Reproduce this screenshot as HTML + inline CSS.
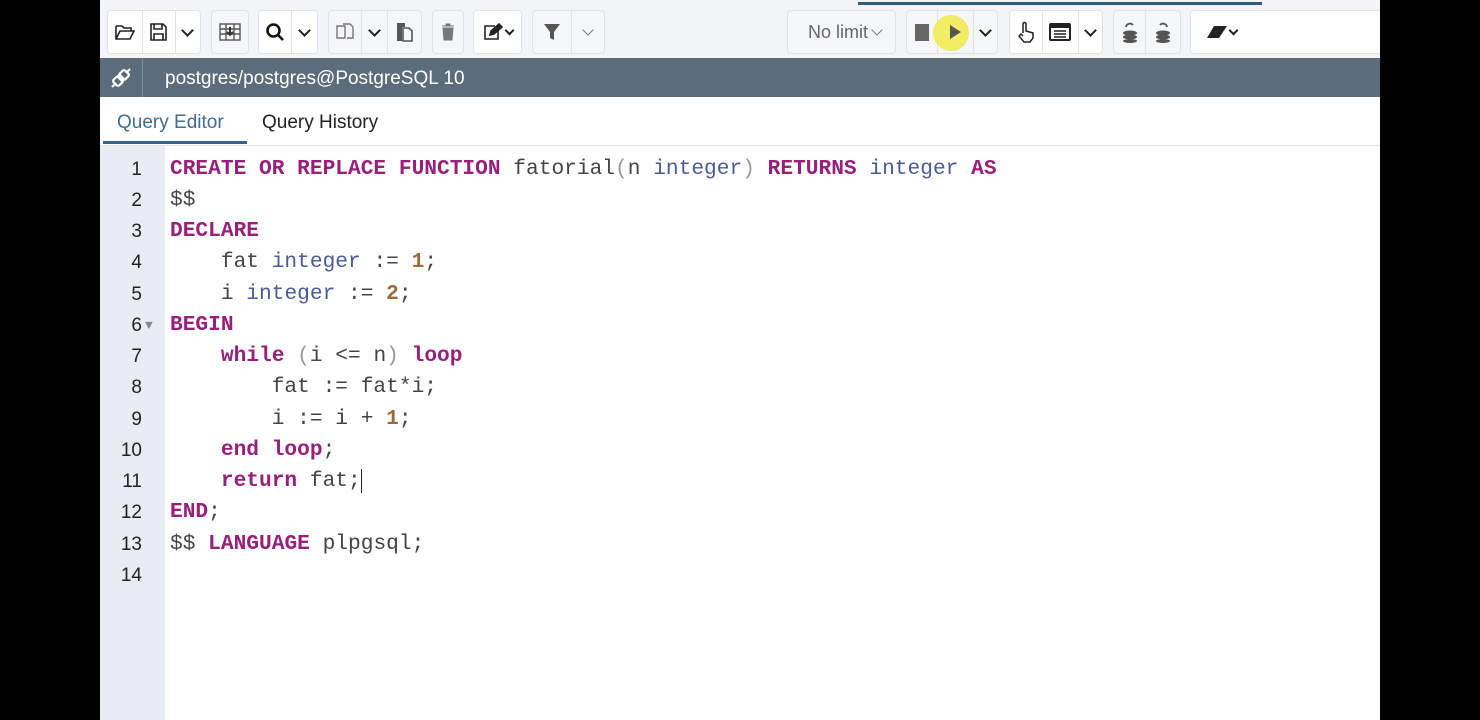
<!DOCTYPE html>
<html><head><meta charset="utf-8"><style>
*{margin:0;padding:0;box-sizing:border-box}
body{width:1480px;height:720px;background:#000;position:relative;overflow:hidden;font-family:"Liberation Sans",sans-serif}
#app{position:absolute;left:100px;top:0;width:1280px;height:720px;background:#fff;overflow:hidden}
#tb{position:absolute;left:0;top:0;width:1280px;height:58px;background:#f2f4f7}
.grp{position:absolute;top:10px;height:44px;background:#fff;border:1px solid #dfe3e8;border-radius:4px;display:flex}
.grp.g{background:#f5f6f8}
.c{height:100%;border-right:1px solid #dfe3e8;display:flex;align-items:center;justify-content:center;color:#222;font-size:15px}
.c:last-child{border-right:none}
.dd::after{content:"";width:7px;height:7px;border-right:2px solid #222;border-bottom:2px solid #222;transform:rotate(45deg);margin-top:-4px}
.ddl::after{content:"";width:7px;height:7px;border-right:1.5px solid #777;border-bottom:1.5px solid #777;transform:rotate(45deg);margin-top:-4px}
#hdr{position:absolute;left:0;top:58px;width:1280px;height:39px;background:#5b6c7b;color:#fff;font-size:19px}
#tabs{position:absolute;left:0;top:97px;width:1280px;height:49px;border-bottom:1px solid #e2e5ea;font-size:19px}
#gut{position:absolute;left:0;top:146px;width:65px;height:574px;background:#e9edf3}
.ln{position:absolute;font:21.2px/31.25px "Liberation Mono",monospace;white-space:pre}
.num{left:0;width:42px;text-align:right;color:#222;font-family:"Liberation Sans",sans-serif;font-size:19px}
.code{left:70px;color:#444}
.k{color:#98207c;font-weight:bold}
.t{color:#4a5a9a}
.n{color:#9a6a3a;font-weight:bold}
.p{color:#999}
</style></head><body>
<div id="app">
<div id="tb">
 <div style="position:absolute;left:758px;top:2px;width:404px;height:3px;background:#2f5d80"></div>
 <div class="grp" style="left:7px;width:94px">
  <div class="c" style="width:36px"><svg width="20" height="18" viewBox="0 0 20 18" fill="none" stroke="#222" stroke-width="1.6"><path d="M1 3h6l2 2h7v3M1 3v13h14l4-8H5L1 16"/></svg></div>
  <div class="c" style="width:33px"><svg width="17" height="18" viewBox="0 0 17 18" fill="none" stroke="#222" stroke-width="1.6"><path d="M1 1h12l3 3v13H1z M4 1v5h8V1 M4 17v-6h9v6"/></svg></div>
  <div class="c dd" style="width:25px"></div></div>
 <div class="grp g" style="left:111px;width:38px"><div class="c" style="width:38px"><svg width="22" height="18" viewBox="0 0 22 18" fill="none" stroke="#555" stroke-width="1.4"><rect x="1" y="1" width="20" height="16"/><path d="M1 6h20M1 11h20M7 1v16M15 1v16"/><path d="M11 4v8M8 9l3 3 3-3" stroke="#333" stroke-width="2"/></svg></div></div>
 <div class="grp" style="left:158px;width:60px"><div class="c" style="width:34px"><svg width="20" height="20" viewBox="0 0 20 20" fill="none" stroke="#111" stroke-width="2.6"><circle cx="8.5" cy="8.5" r="6"/><path d="M13 13l5 5"/></svg></div><div class="c dd" style="width:26px"></div></div>
 <div class="grp g" style="left:228px;width:94px"><div class="c" style="width:34px"><svg width="20" height="20" viewBox="0 0 20 20" fill="none" stroke="#777" stroke-width="1.4"><path d="M2 4h8v12H2zM8 2h7l3 3v11h-6"/></svg></div><div class="c dd" style="width:26px"></div><div class="c" style="width:34px"><svg width="18" height="20" viewBox="0 0 18 20"><path d="M2 1h8v4h-3v14H2z" fill="#555"/><path d="M8 6h6l3 3v10H8z" fill="none" stroke="#555" stroke-width="1.6"/></svg></div></div>
 <div class="grp g" style="left:332px;width:32px"><div class="c" style="width:32px"><svg width="14" height="18" viewBox="0 0 14 18"><path d="M1 3h12M5 3V1h4v2M2 5h10l-1 12H3z" fill="#777" stroke="#777"/></svg></div></div>
 <div class="grp" style="left:373px;width:49px"><div class="c" style="width:49px;gap:3px"><svg width="20" height="18" viewBox="0 0 20 18" fill="none" stroke="#222" stroke-width="1.6"><path d="M12 3H2v13h13V8"/><path d="M7 12l1-4 8-7 3 3-8 7z" fill="#222"/></svg><span style="width:7px;height:7px;border-right:2px solid #222;border-bottom:2px solid #222;transform:rotate(45deg);margin-top:-4px"></span></div></div>
 <div class="grp g" style="left:432px;width:73px"><div class="c" style="width:40px"><svg width="16" height="18" viewBox="0 0 16 18"><path d="M0 1h16l-6 8v8l-4-2V9z" fill="#555"/></svg></div><div class="c ddl" style="width:33px"></div></div>
 <div class="grp g" style="left:687px;width:109px"><div class="c" style="width:109px;justify-content:space-between;padding:0 14px 0 20px;color:#666;font-size:18px">No limit<span style="width:8px;height:8px;border-right:1.5px solid #777;border-bottom:1.5px solid #777;transform:rotate(45deg);margin-top:-4px"></span></div></div>
 <div class="grp g" style="left:806px;width:92px"><div class="c" style="width:32px"><div style="width:14px;height:17px;background:#666"></div></div><div class="c" style="width:36px;position:relative"><div style="position:absolute;left:-5px;top:4px;width:36px;height:36px;border-radius:50%;background:#f0ea4a;opacity:.85"></div><svg style="position:relative" width="14" height="16" viewBox="0 0 14 16"><path d="M2 1l11 7-11 7z" fill="#555"/></svg></div><div class="c dd" style="width:24px"></div></div>
 <div class="grp" style="left:909px;width:94px"><div class="c" style="width:34px"><svg width="18" height="22" viewBox="0 0 18 22" fill="none" stroke="#222" stroke-width="1.5"><path d="M6 12V3a1.5 1.5 0 013 0v7l7 2v5l-3 4H7l-5-6 2-2 2 2"/></svg></div><div class="c" style="width:36px"><svg width="22" height="18" viewBox="0 0 22 18"><rect x="1" y="1" width="20" height="16" rx="1" fill="none" stroke="#222" stroke-width="2"/><rect x="1" y="1" width="20" height="4" fill="#222"/><path d="M5 8h12M5 11h12M5 14h12" stroke="#222" stroke-width="1.5"/></svg></div><div class="c dd" style="width:24px"></div></div>
 <div class="grp g" style="left:1013px;width:68px"><div class="c" style="width:33px"><svg width="16" height="22" viewBox="0 0 16 22"><path d="M4 6a4 4 0 017-2" fill="none" stroke="#555" stroke-width="1.8"/><ellipse cx="8" cy="12" rx="7" ry="2.5" fill="#555"/><ellipse cx="8" cy="16" rx="7" ry="2.5" fill="#555"/><ellipse cx="8" cy="20" rx="7" ry="2" fill="#555"/></svg></div><div class="c" style="width:35px"><svg width="16" height="22" viewBox="0 0 16 22"><path d="M12 6a4 4 0 00-7-2" fill="none" stroke="#555" stroke-width="1.8"/><ellipse cx="8" cy="12" rx="7" ry="2.5" fill="#555"/><ellipse cx="8" cy="16" rx="7" ry="2.5" fill="#555"/><ellipse cx="8" cy="20" rx="7" ry="2" fill="#555"/></svg></div></div>
 <div class="grp" style="left:1090px;width:200px"><div class="c" style="width:60px;gap:2px"><svg width="22" height="14" viewBox="0 0 22 14"><path d="M8 1h13l-8 12H1z" fill="#222"/></svg><span style="width:7px;height:7px;border-right:2px solid #222;border-bottom:2px solid #222;transform:rotate(45deg);margin-top:-4px"></span></div></div>
</div>
<div id="hdr">
 <div style="position:absolute;left:0;top:0;width:43px;height:39px;border-right:1px solid #7d8c99;display:flex;align-items:center;justify-content:center"><svg width="26" height="26" viewBox="0 0 26 26" fill="none" stroke="#fff" stroke-width="2.2"><path d="M4 22l4-4M22 4l-4 4"/><path d="M9 11l6 6M11 9l6 6"/><rect x="6" y="12" width="8" height="8" rx="2" transform="rotate(-45 10 16)"/><rect x="12" y="6" width="8" height="8" rx="2" transform="rotate(-45 16 10)"/></svg></div>
 <div style="position:absolute;left:65px;top:10px">postgres/postgres@PostgreSQL 10</div>
</div>
<div id="tabs">
 <div style="position:absolute;left:17px;top:15px;color:#3f6d92">Query Editor</div>
 <div style="position:absolute;left:162px;top:15px;color:#222">Query History</div>
 <div style="position:absolute;left:3px;top:44px;width:144px;height:3px;background:#326690"></div>
</div>
<div id="gut"></div>
<div style="position:absolute;left:0;top:153.5px;width:1280px">
<div class="ln num" style="top:0">1</div><div class="ln code" style="top:0"><span class="k">CREATE OR REPLACE FUNCTION</span> fatorial<span class="p">(</span>n <span class="t">integer</span><span class="p">)</span> <span class="k">RETURNS</span> <span class="t">integer</span> <span class="k">AS</span></div>
<div class="ln num" style="top:31.25px">2</div><div class="ln code" style="top:31.25px">$$</div>
<div class="ln num" style="top:62.5px">3</div><div class="ln code" style="top:62.5px"><span class="k">DECLARE</span></div>
<div class="ln num" style="top:93.75px">4</div><div class="ln code" style="top:93.75px">    fat <span class="t">integer</span> := <span class="n">1</span>;</div>
<div class="ln num" style="top:125px">5</div><div class="ln code" style="top:125px">    i <span class="t">integer</span> := <span class="n">2</span>;</div>
<div class="ln num" style="top:156.25px">6</div><div class="ln" style="top:156.25px;left:45px;color:#888;font-size:13px">▼</div><div class="ln code" style="top:156.25px"><span class="k">BEGIN</span></div>
<div class="ln num" style="top:187.5px">7</div><div class="ln code" style="top:187.5px">    <span class="k">while</span> <span class="p">(</span>i &lt;= n<span class="p">)</span> <span class="k">loop</span></div>
<div class="ln num" style="top:218.75px">8</div><div class="ln code" style="top:218.75px">        fat := fat*i;</div>
<div class="ln num" style="top:250px">9</div><div class="ln code" style="top:250px">        i := i + <span class="n">1</span>;</div>
<div class="ln num" style="top:281.25px">10</div><div class="ln code" style="top:281.25px">    <span class="k">end loop</span>;</div>
<div class="ln num" style="top:312.5px">11</div><div class="ln code" style="top:312.5px">    <span class="k">return</span> fat;<span style="border-left:1.5px solid #222"></span></div>
<div class="ln num" style="top:343.75px">12</div><div class="ln code" style="top:343.75px"><span class="k">END</span>;</div>
<div class="ln num" style="top:375px">13</div><div class="ln code" style="top:375px">$$ <span class="k">LANGUAGE</span> plpgsql;</div>
<div class="ln num" style="top:406.25px">14</div>
</div>
</div>
</body></html>
